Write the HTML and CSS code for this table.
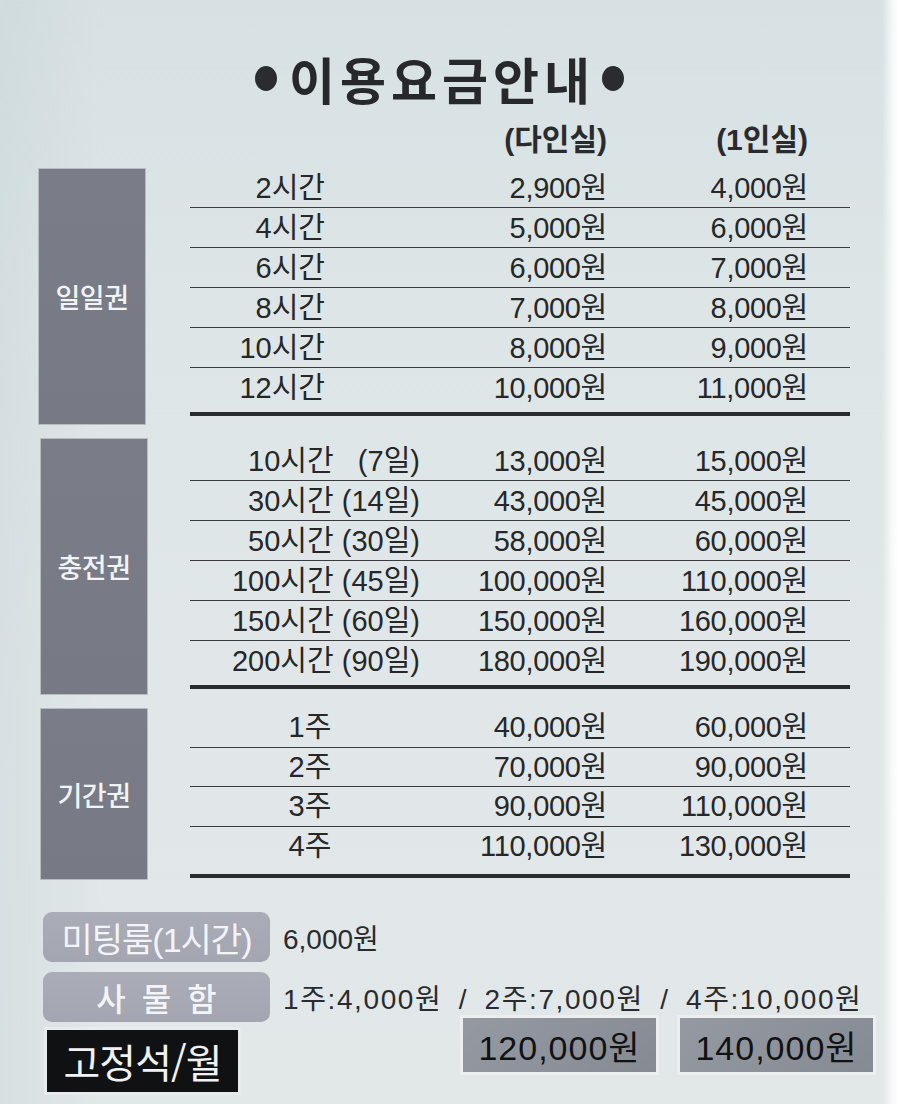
FILE: index.html
```html
<!DOCTYPE html>
<html lang="ko">
<head>
<meta charset="utf-8">
<title>이용요금안내</title>
<link rel="stylesheet" href="styles.css">
</head>
<body>
<div class="sign">
  <h1 class="title"><span class="dot"></span>이용요금안내<span class="dot"></span></h1>

  <div class="head-row">
    <span></span>
    <span class="hd">(다인실)</span>
    <span class="hd">(1인실)</span>
  </div>

  <section class="sec sec1">
    <div class="tag"><span>일일권</span></div>
    <div class="tbl">
      <div class="row"><span class="lbl">2시간</span><span class="p">2,900원</span><span class="p">4,000원</span></div>
      <div class="row"><span class="lbl">4시간</span><span class="p">5,000원</span><span class="p">6,000원</span></div>
      <div class="row"><span class="lbl">6시간</span><span class="p">6,000원</span><span class="p">7,000원</span></div>
      <div class="row"><span class="lbl">8시간</span><span class="p">7,000원</span><span class="p">8,000원</span></div>
      <div class="row"><span class="lbl">10시간</span><span class="p">8,000원</span><span class="p">9,000원</span></div>
      <div class="row last"><span class="lbl">12시간</span><span class="p">10,000원</span><span class="p">11,000원</span></div>
      <div class="thick"></div>
    </div>
  </section>

  <section class="sec sec2">
    <div class="tag"><span>충전권</span></div>
    <div class="tbl">
      <div class="row"><span class="lbl">10시간&nbsp;&nbsp;&nbsp;(7일)</span><span class="p">13,000원</span><span class="p">15,000원</span></div>
      <div class="row"><span class="lbl">30시간 (14일)</span><span class="p">43,000원</span><span class="p">45,000원</span></div>
      <div class="row"><span class="lbl">50시간 (30일)</span><span class="p">58,000원</span><span class="p">60,000원</span></div>
      <div class="row"><span class="lbl">100시간 (45일)</span><span class="p">100,000원</span><span class="p">110,000원</span></div>
      <div class="row"><span class="lbl">150시간 (60일)</span><span class="p">150,000원</span><span class="p">160,000원</span></div>
      <div class="row last"><span class="lbl">200시간 (90일)</span><span class="p">180,000원</span><span class="p">190,000원</span></div>
      <div class="thick"></div>
    </div>
  </section>

  <section class="sec sec3">
    <div class="tag"><span>기간권</span></div>
    <div class="tbl">
      <div class="row"><span class="lbl">1주</span><span class="p">40,000원</span><span class="p">60,000원</span></div>
      <div class="row"><span class="lbl">2주</span><span class="p">70,000원</span><span class="p">90,000원</span></div>
      <div class="row"><span class="lbl">3주</span><span class="p">90,000원</span><span class="p">110,000원</span></div>
      <div class="row last"><span class="lbl">4주</span><span class="p">110,000원</span><span class="p">130,000원</span></div>
      <div class="thick"></div>
    </div>
  </section>

  <div class="extras">
    <div class="pill">미팅룸(1시간)</div>
    <div class="etext">6,000원</div>

    <div class="pill spaced">사물함</div>
    <div class="etext locker">1주:4,000원 / 2주:7,000원 / 4주:10,000원</div>

    <div class="fixed">고정석/월</div>
    <div class="fixed-prices">
      <div class="pbox">120,000원</div>
      <div class="pbox">140,000원</div>
    </div>
  </div>
</div>
</body>
</html>
```

FILE: styles.css
```css
html, body {
  margin: 0;
  padding: 0;
}

body {
  width: 897px;
  height: 1104px;
  overflow: hidden;
  font-family: "Liberation Sans", "Noto Sans CJK KR", sans-serif;
  color: #262729;
  background:
    linear-gradient(90deg, rgba(190,206,210,0.3) 0px, rgba(255,255,255,0) 100px, rgba(255,255,255,0) 882px, rgba(255,255,255,0.8) 893px, rgba(255,255,255,0.9) 897px),
    linear-gradient(180deg, #d7e1e3 0px, #dde5e6 300px, #e1e7e8 700px, #e2e7e8 1104px);
}

.sign {
  padding: 52px 0 0 38px;
  width: 815px;
}

/* title */
.title {
  margin: 0 0 0 217px;
  height: 52px;
  display: flex;
  align-items: center;
  gap: 12px;
  font-family: "Noto Sans CJK KR", sans-serif;
  font-weight: 700;
  font-size: 50px;
  line-height: 52px;
  letter-spacing: 5px;
  color: #27282b;
}

.dot {
  display: inline-block;
  width: 22px;
  height: 25px;
  border-radius: 50%;
  background: #2b2c30;
}

.dot:last-child { margin-left: -5px; }

/* header */
.head-row {
  margin-top: 18px;
  margin-left: 152px;
  display: grid;
  grid-template-columns: 240px 177px 201px;
  height: 36px;
  align-items: center;
}

.hd {
  text-align: right;
  font-weight: 700;
  font-size: 30px;
  line-height: 36px;
  color: #2a2b2e;
}

/* sections */
.sec {
  display: grid;
  grid-template-columns: 108px 660px;
  column-gap: 44px;
}

.sec1 { margin-top: 10px; }
.sec2 { margin-top: 13px; }
.sec3 { margin-top: 13px; }

.tag {
  background: linear-gradient(180deg, #7a7d87, #777a84);
  border: 1px solid #b6bcc0;
  display: flex;
  align-items: center;
  justify-content: center;
  color: #f2f3f4;
  font-family: "Noto Sans CJK KR", sans-serif;
  font-size: 27px;
  font-weight: 500;
  letter-spacing: -0.5px;
}

.sec2 .tag, .sec3 .tag { margin-left: 2px; margin-right: -2px; }

.tbl {
  display: flex;
  flex-direction: column;
}

.row {
  box-sizing: border-box;
  height: 40px;
  display: grid;
  grid-template-columns: 240px 177px 201px;
  align-items: center;
  border-bottom: 1.5px solid #3a3b3e;
  font-size: 29px;
  line-height: 32px;
}

.row.last { border-bottom: none; }

.lbl {
  text-align: right;
  white-space: pre;
}

.p {
  text-align: right;
  letter-spacing: -0.3px;
}

.sec1 .lbl { padding-right: 105px; }
.sec2 .lbl { padding-right: 10px; }
.sec3 .lbl { text-align: center; }

.thick {
  height: 4px;
  background: #2a2b2e;
  margin-top: 4px;
}

.sec1 .tbl { padding-bottom: 9px; }
.sec2 .tbl { padding-top: 3px; padding-bottom: 6px; }
.sec2 .thick { margin-top: 4px; }
.sec3 .row { height: 39.5px; }
.sec3 .thick { margin-top: 8px; }
.sec3 .tbl { padding-bottom: 2px; }

/* extras */
.extras {
  margin-top: 32px;
  margin-left: 5px;
  display: grid;
  grid-template-columns: 227px auto;
  column-gap: 13px;
  row-gap: 10px;
  align-items: center;
}

.pill {
  height: 50px;
  border-radius: 9px;
  background: linear-gradient(180deg, #aaacb7, #a3a5b0);
  color: #f3f4f7;
  font-size: 34px;
  display: flex;
  align-items: center;
  justify-content: center;
  letter-spacing: -1px;
}

.pill.spaced {
  font-family: "Noto Sans CJK KR", sans-serif;
  font-weight: 500;
  letter-spacing: 16px;
  padding-left: 16px;
  font-size: 32px;
}

.etext {
  font-size: 28px;
  color: #2a2b2e;
}

.locker {
  word-spacing: 7px;
  letter-spacing: 1.6px;
}

.fixed {
  margin-top: -2px;
  margin-left: 4px;
  width: 191px;
  height: 62px;
  box-sizing: border-box;
  background: #101112;
  box-shadow: 0 0 0 3px #e8ebec;
  color: #f0f1f2;
  font-family: "Noto Sans CJK KR", sans-serif;
  font-size: 40px;
  letter-spacing: -1px;
  display: flex;
  align-items: center;
  justify-content: center;
}

.fixed-prices {
  align-self: start;
  margin-top: -14px;
  display: flex;
  justify-content: flex-end;
  gap: 24px;
  width: 590px;
}

.pbox {
  width: 193px;
  height: 54px;
  box-sizing: border-box;
  background: linear-gradient(135deg, #959aa2, #868b93);
  box-shadow: 0 0 0 3px #eceeef;
  display: flex;
  align-items: center;
  justify-content: center;
  font-size: 34px;
  color: #111214;
  letter-spacing: 1px;
}
```
